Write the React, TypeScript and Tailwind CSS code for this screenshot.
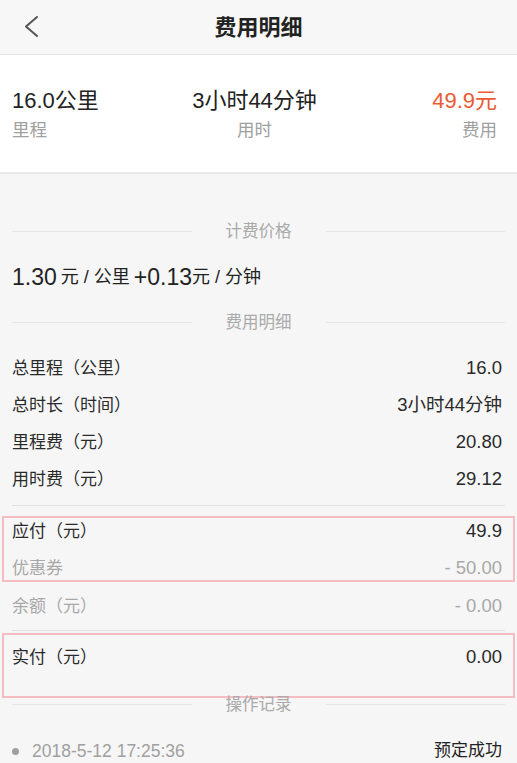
const font = { fontFamily: '"Liberation Sans", "Noto Sans CJK SC", sans-serif' };

function Divider({ label, className = "" }: { label: string; className?: string }) {
  return (
    <div className={`flex h-[20px] items-center px-3 ${className}`}>
      <div className="h-px flex-1 bg-[#e6e6e6]" />
      <span className="px-[34px] text-[16.5px] leading-none text-[#aaaaaa]">{label}</span>
      <div className="h-px flex-1 bg-[#e6e6e6]" />
    </div>
  );
}

function Row({
  label,
  value,
  muted,
  className = "",
}: {
  label: string;
  value: string;
  muted?: boolean;
  className?: string;
}) {
  return (
    <div
      className={`flex items-center justify-between text-[17px] leading-none ${
        muted ? "text-[#a8a8a8]" : "text-[#2a2a2a]"
      } ${className}`}
    >
      <span>{label}</span>
      <span className="text-[18.5px]">{value}</span>
    </div>
  );
}

export default function App() {
  const details = [
    ["总里程（公里）", "16.0"],
    ["总时长（时间）", "3小时44分钟"],
    ["里程费（元）", "20.80"],
    ["用时费（元）", "29.12"],
  ];

  return (
    <div className="min-h-[763px] w-[517px] bg-[#f6f6f6]" style={font}>
      {/* header */}
      <div className="relative flex h-[55px] items-center justify-center border-b border-[#e2e2e2] bg-[#f7f7f7]">
        <svg
          className="absolute left-[22px] top-[15px]"
          width="20"
          height="24"
          viewBox="0 0 20 24"
          fill="none"
          stroke="#555"
          strokeWidth="2"
          strokeLinecap="round"
          strokeLinejoin="round"
        >
          <path d="M15 2 L4 11.5 L15 21" />
        </svg>
        <span className="text-[22px] font-bold text-[#222]">费用明细</span>
      </div>

      {/* summary */}
      <div className="flex h-[119px] items-start border-b-2 border-[#e8e8e8] bg-white pl-3 pr-5 pt-[33px]">
        <div className="flex flex-1 flex-col items-start">
          <span className="text-[22px] leading-[26px] text-[#222]">16.0公里</span>
          <span className="mt-[6px] text-[17.5px] leading-[20px] text-[#a0a0a0]">里程</span>
        </div>
        <div className="flex flex-1 flex-col items-center">
          <span className="text-[22px] leading-[26px] text-[#222]">3小时44分钟</span>
          <span className="mt-[6px] text-[17.5px] leading-[20px] text-[#a0a0a0]">用时</span>
        </div>
        <div className="flex flex-1 flex-col items-end">
          <span className="text-[22px] leading-[26px] text-[#ec5a35]">49.9元</span>
          <span className="mt-[6px] text-[17.5px] leading-[20px] text-[#a0a0a0]">费用</span>
        </div>
      </div>

      <Divider label="计费价格" className="mt-[47px]" />

      <div className="mt-[22px] flex h-[28px] items-center px-3 text-[#222]">
        <span className="text-[23px]">1.30</span>
        <span className="ml-1 text-[18px]">元 / 公里 </span>
        <span className="ml-1 text-[23px]">+0.13</span>
        <span className="text-[18px]">元 / 分钟</span>
      </div>

      <Divider label="费用明细" className="mt-[21px]" />

      <div className="mt-[18px] pl-3 pr-[15px]">
        {details.map(([l, v]) => (
          <Row key={l} label={l} value={v} className="h-[37px]" />
        ))}
      </div>

      <div className="mx-3 mt-[7px] h-px bg-[#e2e2e2]" />

      <div className="mx-[2px] mt-[10px] flex h-[66px] flex-col gap-[13px] border-2 border-[#f5bcc2] pl-[8px] pr-[11px] pt-[1px]">
        <Row label="应付（元）" value="49.9" className="h-[24px]" />
        <Row label="优惠券" value="- 50.00" muted className="h-[24px]" />
      </div>

      <Row label="余额（元）" value="- 0.00" muted className="mt-[12px] h-[24px] pl-3 pr-[15px]" />

      <div className="mx-3 mt-[12px] h-px bg-[#e2e2e2]" />

      <div className="mx-[2px] mt-[2px] h-[65px] border-2 border-[#f5bcc2] pl-[8px] pr-[11px] pt-[10px]">
        <Row label="实付（元）" value="0.00" className="h-[24px]" />
      </div>

      <Divider label="操作记录" className="-mt-[4px]" />

      <div className="mt-[27px] flex h-[20px] items-center justify-between pl-3 pr-[15px]">
        <div className="flex items-center">
          <span className="h-[7px] w-[7px] rounded-full bg-[#a0a0a0]" />
          <span className="ml-[13px] text-[17.5px] text-[#a0a0a0]">2018-5-12 17:25:36</span>
        </div>
        <span className="text-[17px] text-[#222]">预定成功</span>
      </div>
    </div>
  );
}
